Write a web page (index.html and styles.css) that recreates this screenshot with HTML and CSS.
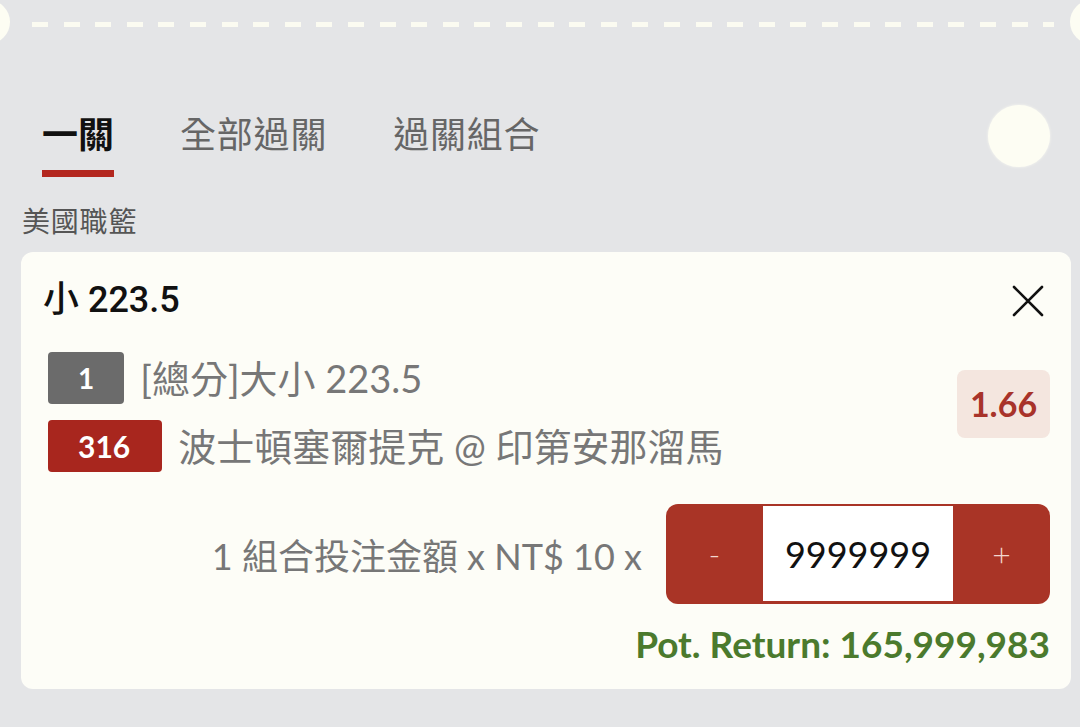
FILE: index.html
```html
<!DOCTYPE html>
<html lang="zh-Hant">
<head>
<meta charset="utf-8">
<link rel="stylesheet" href="styles.css">
</head>
<body>
<div class="page">
  <div class="ticket-edge"><div class="dash-line"></div></div>
  <div class="tabs">
    <div class="tab active">一關</div>
    <div class="tab">全部過關</div>
    <div class="tab">過關組合</div>
    <div class="tab-dot"></div>
  </div>
  <div class="league">美國職籃</div>
  <div class="card">
    <div class="card-head">
      <div class="pick">小 223.5</div>
      <svg class="close" width="32" height="32" viewBox="0 0 32 32"><path d="M2 2 L30 30 M30 2 L2 30" stroke="#111" stroke-width="2.6" fill="none" stroke-linecap="round"/></svg>
    </div>
    <div class="sel">
      <div class="sel-rows">
        <div class="sel-row"><span class="badge grey">1</span><span class="sel-text">[總分]大小 223.5</span></div>
        <div class="sel-row"><span class="badge red">316</span><span class="sel-text">波士頓塞爾提克 @ 印第安那溜馬</span></div>
      </div>
      <div class="odds">1.66</div>
    </div>
    <div class="stake">
      <div class="stake-text">1 組合投注金額 x NT$ 10 x</div>
      <div class="stepper">
        <div class="step-btn">-</div>
        <div class="step-input">9999999</div>
        <div class="step-btn plus">+</div>
      </div>
    </div>
    <div class="pot">Pot. Return: 165,999,983</div>
  </div>
</div>
</body>
</html>
```

FILE: styles.css
```css
html, body {
  margin: 0;
  padding: 0;
}
body {
  background: #e4e5e7;
  width: 1080px;
  height: 727px;
  overflow: hidden;
  font-family: Lato, "Noto Sans CJK TC", sans-serif;
}
.page {
  position: relative;
  height: 727px;
}
.ticket-edge {
  position: relative;
  height: 106px;
}
.ticket-edge::before,
.ticket-edge::after {
  content: "";
  position: absolute;
  top: 0;
  width: 44px;
  height: 44px;
  border-radius: 50%;
  background: #fdfdf3;
}
.ticket-edge::before { left: -34px; }
.ticket-edge::after { right: -34px; }
.dash-line {
  position: absolute;
  top: 22px;
  left: 32px;
  width: 1022px;
  height: 5px;
  background: repeating-linear-gradient(to right, #fbfbf1 0, #fbfbf1 16px, transparent 16px, transparent 31.6px);
}
.tabs {
  position: relative;
  display: flex;
  gap: 66px;
  padding-left: 42px;
}
.tab {
  font-family: "Noto Sans CJK TC", sans-serif;
  font-size: 36px;
  letter-spacing: 0.8px;
  line-height: 52px;
  color: #666;
}
.tab.active {
  color: #111;
  font-weight: 700;
  letter-spacing: 0;
}
.tab.active::after {
  content: "";
  display: block;
  height: 7px;
  margin-top: 12px;
  background: #b3271f;
}
.tab-dot {
  position: absolute;
  right: 30px;
  top: -1px;
  width: 62px;
  height: 62px;
  border-radius: 50%;
  background: #fdfdf3;
  box-shadow: 0 0 3px rgba(255,255,245,0.8);
}
.league {
  margin: 23px 0 12px 22px;
  font-family: "Noto Sans CJK TC", sans-serif;
  font-size: 28px;
  letter-spacing: 0.8px;
  line-height: 40px;
  color: #555;
}
.card {
  margin: 0 9px 0 21px;
  height: 437px;
  box-sizing: border-box;
  background: #fdfdf7;
  border-radius: 12px;
  padding: 24px 21px 0 22px;
}
.card-head {
  display: flex;
  justify-content: space-between;
  align-items: center;
  height: 48px;
}
.pick {
  font-family: Roboto, "Noto Sans CJK TC", sans-serif;
  font-size: 36px;
  font-weight: 500;
  color: #111;
  line-height: 48px;
}
.close {
  margin-right: 6px;
  margin-top: 2px;
}
.sel {
  display: flex;
  justify-content: space-between;
  align-items: center;
  margin-top: 28px;
  padding-left: 5px;
}
.sel-rows {
  display: flex;
  flex-direction: column;
  gap: 16px;
}
.sel-row {
  display: flex;
  align-items: center;
  gap: 16px;
  height: 52px;
}
.badge {
  height: 52px;
  min-width: 76px;
  box-sizing: border-box;
  padding: 0 30px;
  border-radius: 4px;
  color: #fff;
  font-family: Lato, sans-serif;
  font-weight: 700;
  font-size: 28px;
  line-height: 52px;
  text-align: center;
}
.badge.grey { background: #6b6b6b; }
.badge.red { background: #a8261e; padding: 0 32px 0 30px; font-size: 30px; }
.sel-text {
  font-family: Lato, "Noto Sans CJK TC", sans-serif;
  font-size: 38px;
  color: #777;
  line-height: 52px;
}
.odds {
  width: 93px;
  height: 68px;
  border-radius: 8px;
  background: #f4e6df;
  color: #a8332a;
  font-family: Lato, sans-serif;
  font-weight: 700;
  font-size: 34px;
  line-height: 68px;
  text-align: center;
  margin-bottom: 16px;
}
.stake {
  display: flex;
  justify-content: flex-end;
  align-items: center;
  gap: 24px;
  margin-top: 32px;
}
.stake-text {
  font-family: Lato, "Noto Sans CJK TC", sans-serif;
  font-size: 36px;
  color: #777;
}
.stepper {
  display: flex;
  width: 384px;
  height: 100px;
  box-sizing: border-box;
  padding: 2px 0 3px;
  background: #a93426;
  border-radius: 12px;
}
.step-btn {
  width: 97px;
  display: flex;
  align-items: center;
  justify-content: center;
  color: #f3d6cf;
  font-family: Lato, sans-serif;
  font-size: 32px;
  font-weight: 300;
}
.step-input {
  flex: 1;
  background: #fff;
  display: flex;
  align-items: center;
  justify-content: center;
  font-family: Lato, sans-serif;
  font-size: 36px;
  color: #111;
}
.pot {
  margin-top: 18px;
  text-align: right;
  font-family: Lato, sans-serif;
  font-weight: 700;
  font-size: 37px;
  line-height: 44px;
  color: #4b7a2d;
}
```
